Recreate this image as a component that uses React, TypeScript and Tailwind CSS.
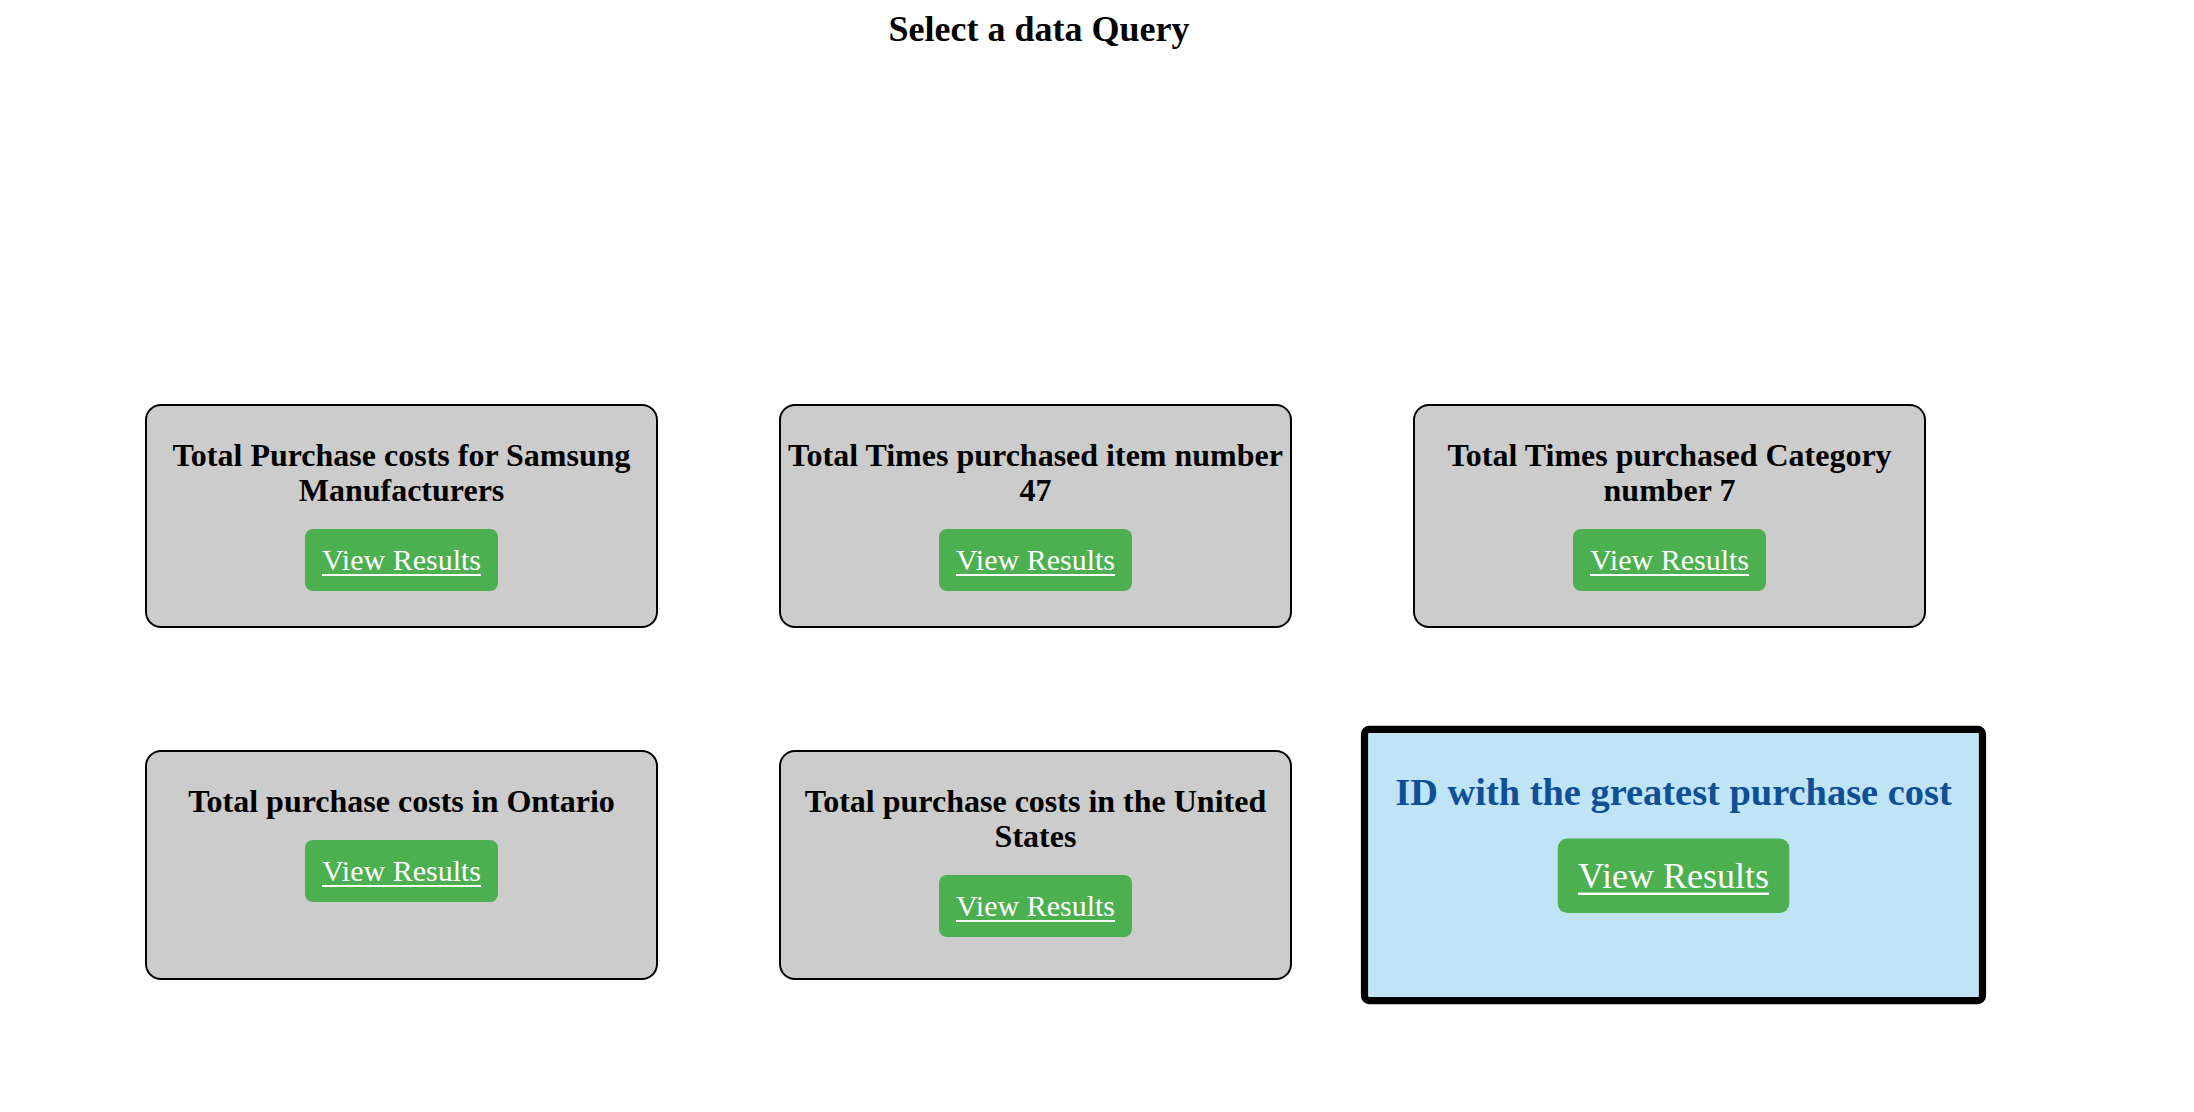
import React from "react";

type CardProps = { title: string; h: string };

function ViewButton() {
  return (
    <a
      href="#"
      className="mt-[21px] block rounded-[8px] bg-[#4CAF50] px-[17px] py-[14px] text-[30px] leading-[34px] text-white underline decoration-[2px] underline-offset-[4px]"
    >
      View Results
    </a>
  );
}

function Card({ title, h }: CardProps) {
  return (
    <div
      className={`flex flex-col items-center rounded-[16px] border-2 border-black bg-[#cccccc] px-[2px] pt-[32px] ${h}`}
    >
      <h3 className="text-center text-[32px] font-bold leading-[35px] text-black">{title}</h3>
      <ViewButton />
    </div>
  );
}

export default function App() {
  return (
    <div className="min-h-[1112px] w-[2078px] bg-white font-['Liberation_Serif',serif] text-black">
      <h1 className="pt-[9px] text-center text-[36px] font-bold leading-[40px]">Select a data Query</h1>
      <div className="mt-[355px] grid grid-cols-[513px_513px_513px] gap-x-[121px] gap-y-[122px] pl-[145px]">
        <Card title="Total Purchase costs for Samsung Manufacturers" h="h-[224px]" />
        <Card title="Total Times purchased item number 47" h="h-[224px]" />
        <Card title="Total Times purchased Category number 7" h="h-[224px]" />
        <Card title="Total purchase costs in Ontario" h="h-[230px]" />
        <Card title="Total purchase costs in the United States" h="h-[230px]" />
        <div className="relative z-10 -mr-[8px] -my-[1px] flex h-[232px] w-[521px] scale-[1.2] flex-col items-center rounded-[7px] border-[6px] border-black bg-[#bee4f6] px-2 pt-[32px]">
          <h3 className="text-center text-[32px] font-bold leading-[35px] text-[#0e4f96]">
            ID with the greatest purchase cost
          </h3>
          <ViewButton />
        </div>
      </div>
    </div>
  );
}
